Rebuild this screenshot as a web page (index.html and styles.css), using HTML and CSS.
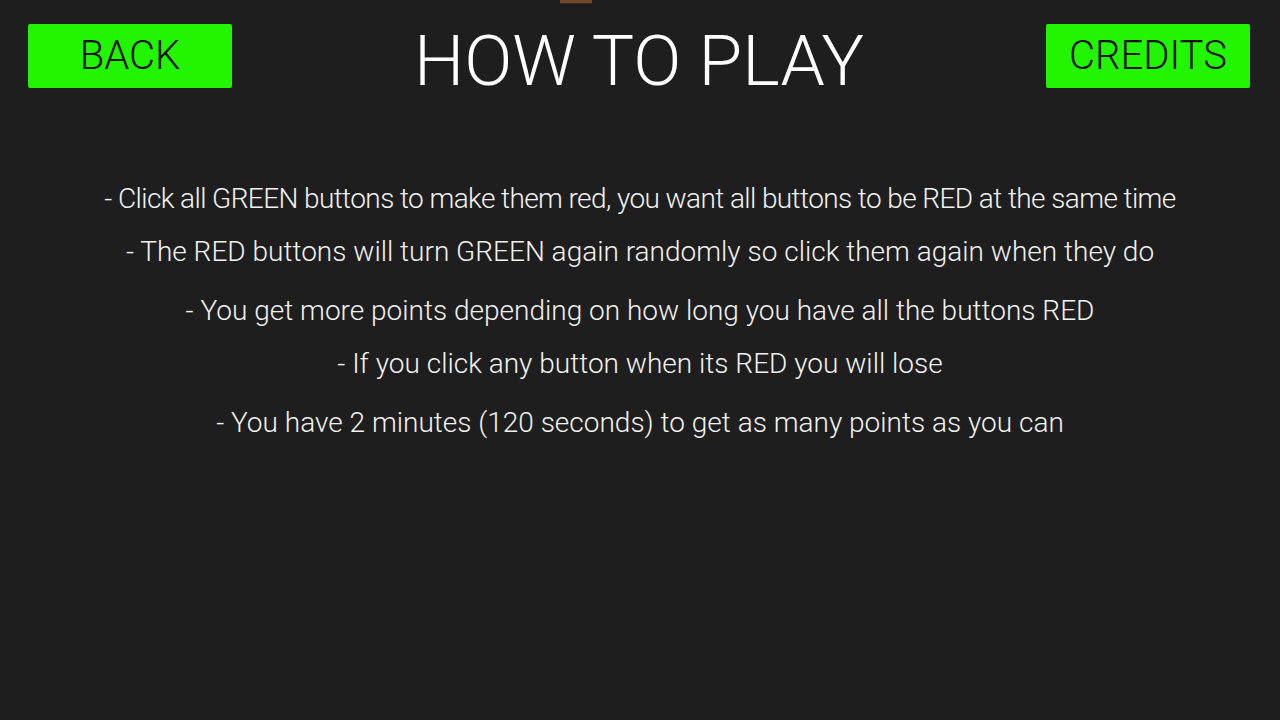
FILE: index.html
```html
<!DOCTYPE html>
<html>
<head>
<meta charset="utf-8">
<link rel="stylesheet" href="styles.css">
</head>
<body>
<div class="topmark"></div>
<header class="header">
  <div class="btn">BACK</div>
  <h1 class="title">HOW TO PLAY</h1>
  <div class="btn">CREDITS</div>
</header>
<main class="rules">
  <p class="rule tight">- Click all GREEN buttons to make them red, you want all buttons to be RED at the same time</p>
  <p class="rule">- The RED buttons will turn GREEN again randomly so click them again when they do</p>
  <p class="rule gap">- You get more points depending on how long you have all the buttons RED</p>
  <p class="rule">- If you click any button when its RED you will lose</p>
  <p class="rule gap">- You have 2 minutes (120 seconds) to get as many points as you can</p>
</main>
</body>
</html>
```
FILE: styles.css
```css
html, body {
  margin: 0;
  padding: 0;
}
body {
  background: #1e1e1e;
  width: 1280px;
  height: 720px;
  overflow: hidden;
  font-family: Roboto, "Liberation Sans", sans-serif;
  font-weight: 300;
  color: #f2f2f2;
  position: relative;
}
.topmark {
  position: absolute;
  left: 560px;
  top: 0;
  width: 32px;
  height: 3px;
  background: #7a4420;
  border-bottom: 1px solid #1f3030;
}
.header {
  display: flex;
  justify-content: space-between;
  align-items: flex-start;
  padding: 24px 30px 0 28px;
}
.btn {
  width: 204px;
  height: 64px;
  background: #22f500;
  border-radius: 2px;
  color: #111;
  font-size: 40px;
  line-height: 64px;
  text-align: center;
}
.title {
  margin: 2px 0 0 0;
  font-size: 71px;
  line-height: 70px;
  font-weight: 300;
  color: #ffffff;
}
.rules {
  padding-top: 76px;
  text-align: center;
}
.rule {
  margin: 0;
  font-size: 28px;
  line-height: 53px;
}
.rule.tight {
  letter-spacing: -0.6px;
}
.rule.gap {
  margin-top: 6px;
}
```
